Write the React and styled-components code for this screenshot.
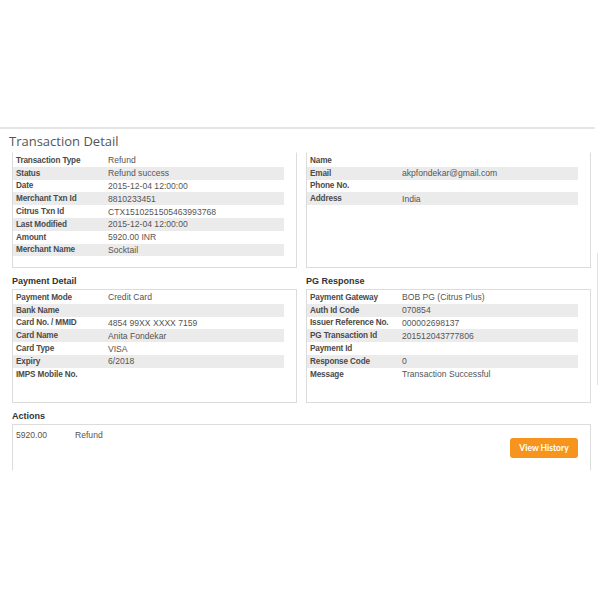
import React from 'react';
import styled, { createGlobalStyle } from 'styled-components';

const GlobalStyle = createGlobalStyle`
  html, body {
    margin: 0;
    padding: 0;
    background: #fff;
  }
  body {
    font-family: "Liberation Sans", Arial, sans-serif;
    color: #444;
  }
`;

const Page = styled.div`
  width: 600px;
  height: 600px;
  padding-top: 127px;
  box-sizing: border-box;
  display: flex;
  align-items: flex-start;
`;

const Screen = styled.div`
  width: 595px;
  border-top: 2px solid #e6e6e6;
  padding: 0 6px 0 12px;
  box-sizing: border-box;
`;

const Gutter = styled.div`
  width: 1px;
  height: 132px;
  margin: 126px 0 0 2px;
  background: #e2e2e2;
`;

const Title = styled.h1`
  margin: 0 0 0 -3px;
  padding: 4px 0 3px;
  font-family: "Open Sans", "Liberation Sans", sans-serif;
  font-weight: 400;
  font-size: 13px;
  line-height: 16px;
  color: #555;
`;

const Grid = styled.div`
  display: grid;
  grid-template-columns: 285px 285px;
  column-gap: 9px;
  align-items: stretch;
`;

const Section = styled.section`
  display: flex;
  flex-direction: column;
  grid-column: ${p => (p.$wide ? '1 / -1' : 'auto')};
  margin-top: ${p => p.$top || 0}px;
`;

const Heading = styled.h2`
  margin: 0;
  height: 15px;
  font-size: 9px;
  line-height: 15px;
  font-weight: bold;
  color: #333;
`;

const Box = styled.div`
  flex: 1;
  border: 1px solid #dcdcdc;
  border-top-color: ${p => (p.$open ? 'transparent' : '#dcdcdc')};
  border-bottom-color: ${p => (p.$cut ? 'transparent' : '#dcdcdc')};
  padding: 1px 12px 0 0;
  min-height: ${p => p.$min || 0}px;
  box-sizing: border-box;
`;

const Row = styled.div`
  display: flex;
  align-items: center;
  height: 12.8px;
  background: ${p => (p.$shaded ? '#ebebeb' : 'transparent')};
`;

const Label = styled.span`
  width: 92px;
  padding-left: 3px;
  flex-shrink: 0;
  font-size: 8.2px;
  font-weight: bold;
  letter-spacing: -0.15px;
  color: #4a4a4a;
  white-space: nowrap;
`;

const Value = styled.span`
  font-size: 8.6px;
  color: #555;
  white-space: nowrap;
`;

const ActionRow = styled.div`
  display: flex;
  align-items: center;
  height: 13px;
  margin-top: 2px;
  padding-left: 3px;
  font-size: 8.6px;
  color: #555;
`;

const Amount = styled.span`
  width: 59px;
`;

const ActionBar = styled.div`
  display: flex;
  justify-content: flex-end;
  margin-top: -3px;
`;

const Button = styled.button`
  width: 68px;
  height: 20px;
  border: none;
  border-radius: 3px;
  background: #f7941d;
  color: #fff;
  font-family: Lato, "Open Sans", sans-serif;
  font-weight: bold;
  font-size: 8.5px;
  padding: 0;
  cursor: pointer;
`;

const transaction = [
  ['Transaction Type', 'Refund'],
  ['Status', 'Refund success'],
  ['Date', '2015-12-04 12:00:00'],
  ['Merchant Txn Id', '8810233451'],
  ['Citrus Txn Id', 'CTX1510251505463993768'],
  ['Last Modified', '2015-12-04 12:00:00'],
  ['Amount', '5920.00 INR'],
  ['Merchant Name', 'Socktail'],
];

const customer = [
  ['Name', ''],
  ['Email', 'akpfondekar@gmail.com'],
  ['Phone No.', ''],
  ['Address', 'India'],
];

const payment = [
  ['Payment Mode', 'Credit Card'],
  ['Bank Name', ''],
  ['Card No. / MMID', '4854 99XX XXXX 7159'],
  ['Card Name', 'Anita Fondekar'],
  ['Card Type', 'VISA'],
  ['Expiry', '6/2018'],
  ['IMPS Mobile No.', ''],
];

const pgResponse = [
  ['Payment Gateway', 'BOB PG (Citrus Plus)'],
  ['Auth Id Code', '070854'],
  ['Issuer Reference No.', '000002698137'],
  ['PG Transaction Id', '201512043777806'],
  ['Payment Id', ''],
  ['Response Code', '0'],
  ['Message', 'Transaction Successful'],
];

const Rows = ({ items }) =>
  items.map(([label, value], i) => (
    <Row key={label} $shaded={i % 2 === 1}>
      <Label>{label}</Label>
      <Value>{value}</Value>
    </Row>
  ));

export default function App() {
  return (
    <>
      <GlobalStyle />
      <Page>
        <Screen>
          <Title>Transaction Detail</Title>
          <Grid>
            <Section>
              <Box $open $min={116}>
                <Rows items={transaction} />
              </Box>
            </Section>
            <Section>
              <Box $open>
                <Rows items={customer} />
              </Box>
            </Section>
            <Section $top={6}>
              <Heading>Payment Detail</Heading>
              <Box $min={114}>
                <Rows items={payment} />
              </Box>
            </Section>
            <Section $top={6}>
              <Heading>PG Response</Heading>
              <Box>
                <Rows items={pgResponse} />
              </Box>
            </Section>
            <Section $wide $top={6}>
              <Heading>Actions</Heading>
              <Box $cut $min={47}>
                <ActionRow>
                  <Amount>5920.00</Amount>
                  <span>Refund</span>
                </ActionRow>
                <ActionBar>
                  <Button>View History</Button>
                </ActionBar>
              </Box>
            </Section>
          </Grid>
        </Screen>
        <Gutter />
      </Page>
    </>
  );
}
